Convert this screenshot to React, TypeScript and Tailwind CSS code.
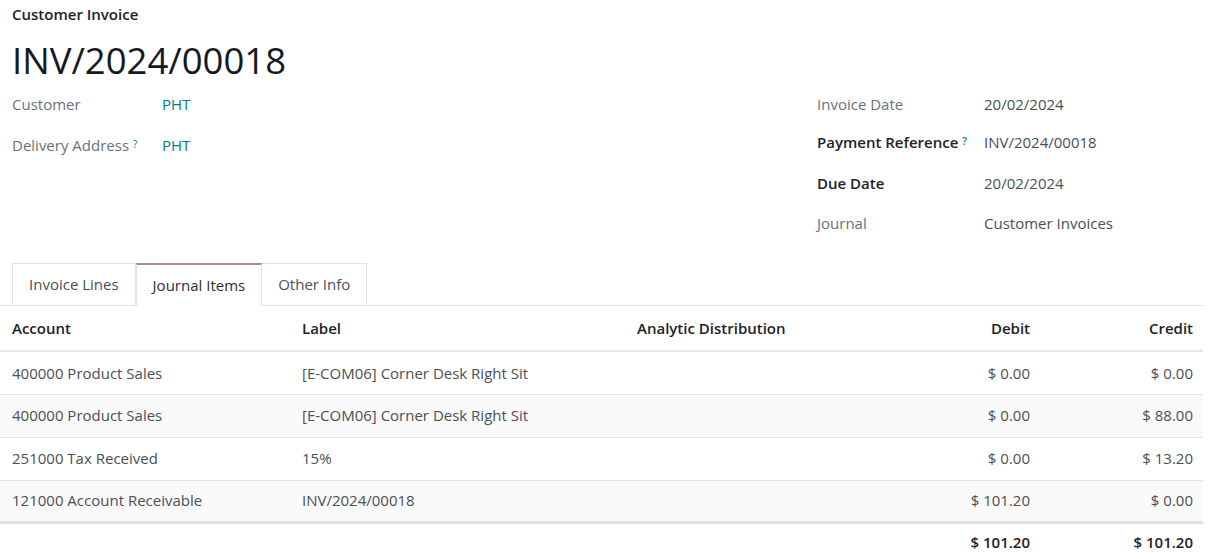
import React from "react";

const rows = [
  { account: "400000 Product Sales", label: "[E-COM06] Corner Desk Right Sit", debit: "$ 0.00", credit: "$ 0.00" },
  { account: "400000 Product Sales", label: "[E-COM06] Corner Desk Right Sit", debit: "$ 0.00", credit: "$ 88.00" },
  { account: "251000 Tax Received", label: "15%", debit: "$ 0.00", credit: "$ 13.20" },
  { account: "121000 Account Receivable", label: "INV/2024/00018", debit: "$ 101.20", credit: "$ 0.00" },
];

function Help() {
  return <sup className="ml-[4px] text-[10px] text-[#017e84] relative -top-[3px]">?</sup>;
}

export default function App() {
  return (
    <div
      className="w-[1213px] h-[559px] bg-white overflow-hidden text-[15px] text-[#4a4f55]"
      style={{ fontFamily: '"Open Sans", "Noto Sans", sans-serif' }}
    >
      <div className="pl-3 pt-[4px]">
        <div className="text-[15px] font-semibold text-[#1e2226] leading-[20px]">Customer Invoice</div>
        <h1 className="text-[36.5px] font-medium text-[#16191d] leading-[52px] mt-[10px]">INV/2024/00018</h1>
      </div>

      <div className="flex pl-3 mt-[7px] h-[170px]">
        <div className="flex-1 flex flex-col">
          <div className="flex h-[41px] items-start">
            <div className="w-[150px] text-[#6c7178]">Customer</div>
            <div className="text-[#017e84]">PHT</div>
          </div>
          <div className="flex h-[41px] items-start">
            <div className="w-[150px] text-[#6c7178]">
              Delivery Address<Help />
            </div>
            <div className="text-[#017e84]">PHT</div>
          </div>
        </div>
        <div className="w-[396px] flex flex-col">
          <div className="flex h-[38px] items-start">
            <div className="w-[167px] text-[#6c7178]">Invoice Date</div>
            <div>20/02/2024</div>
          </div>
          <div className="flex h-[41px] items-start">
            <div className="w-[167px] font-semibold text-[#1e2226]">
              Payment Reference<Help />
            </div>
            <div>INV/2024/00018</div>
          </div>
          <div className="flex h-[40px] items-start">
            <div className="w-[167px] font-semibold text-[#1e2226]">Due Date</div>
            <div>20/02/2024</div>
          </div>
          <div className="flex h-[40px] items-start">
            <div className="w-[167px] text-[#6c7178]">Journal</div>
            <div>Customer Invoices</div>
          </div>
        </div>
      </div>

      <div className="w-[1203px]">
        <div className="flex pl-3 border-b border-[#dee2e6] h-[43px] items-end">
          <div className="h-[43px] -mb-px px-[16px] flex items-center border border-[#dee2e6] bg-white text-[#4a4f55]">
            Invoice Lines
          </div>
          <div className="h-[43px] -mb-px px-[16px] flex items-center border-x border-b border-b-white border-x-[#dee2e6] border-t-2 border-t-[#a38b9d] bg-white text-[#2b2f33]">
            Journal Items
          </div>
          <div className="h-[43px] -mb-px px-[16px] flex items-center border border-l-0 border-[#dee2e6] bg-white text-[#4a4f55]">
            Other Info
          </div>
        </div>

        <table className="w-[1203px] table-fixed border-collapse">
          <colgroup>
            <col className="w-[290px]" />
            <col className="w-[335px]" />
            <col className="w-[255px]" />
            <col className="w-[160px]" />
            <col className="w-[163px]" />
          </colgroup>
          <thead>
            <tr className="h-[45px] border-b-2 border-[#e5e7ea] text-[#1e2226] font-semibold">
              <th className="text-left pl-3 font-semibold">Account</th>
              <th className="text-left pl-3 font-semibold">Label</th>
              <th className="text-left pl-3 font-semibold">Analytic Distribution</th>
              <th className="text-right pr-[10px] font-semibold">Debit</th>
              <th className="text-right pr-[10px] font-semibold">Credit</th>
            </tr>
          </thead>
          <tbody>
            {rows.map((r, i) => (
              <tr
                key={i}
                className={
                  (i % 2 === 1 ? "bg-[#fafafb] " : "bg-white ") +
                  (i === rows.length - 1 ? "h-[42px] border-b-[3px] border-[#dcdfe3]" : "h-[43px] border-b border-[#e3e5e8]")
                }
              >
                <td className="pl-3">{r.account}</td>
                <td className="pl-3">{r.label}</td>
                <td className="pl-3"></td>
                <td className="text-right pr-[10px]">{r.debit}</td>
                <td className="text-right pr-[10px]">{r.credit}</td>
              </tr>
            ))}
          </tbody>
          <tfoot>
            <tr className="h-[38px] font-semibold text-[#1e2226]">
              <td></td>
              <td></td>
              <td></td>
              <td className="text-right pr-[10px]">$ 101.20</td>
              <td className="text-right pr-[10px]">$ 101.20</td>
            </tr>
          </tfoot>
        </table>
      </div>
    </div>
  );
}
